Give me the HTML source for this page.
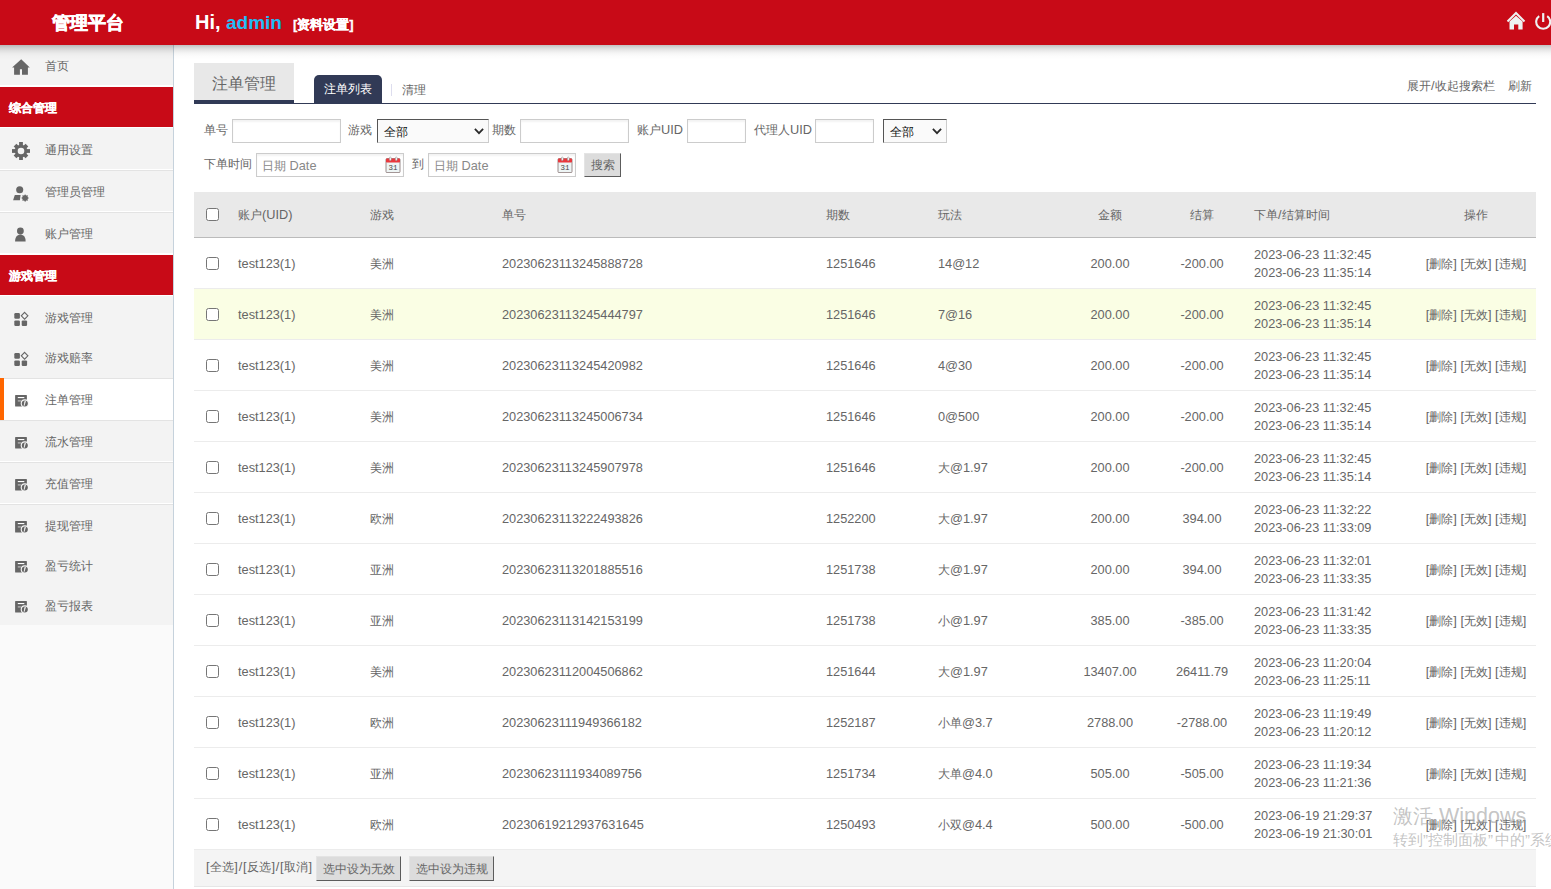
<!DOCTYPE html>
<html><head><meta charset="utf-8"><title>管理平台</title>
<style>
*{margin:0;padding:0;box-sizing:border-box}
html,body{width:1551px;height:889px;overflow:hidden;background:#fff}
body{position:relative;font-family:"Liberation Sans",sans-serif;font-size:12px;color:#555}
.abs{position:absolute}
#hdr{position:absolute;left:0;top:0;width:1551px;height:45px;background:#c80a17}
#hshadow{position:absolute;left:0;top:45px;width:1551px;height:15px;background:linear-gradient(rgba(0,0,0,.24),rgba(0,0,0,.14) 20%,rgba(0,0,0,.075) 40%,rgba(0,0,0,.035) 56%,rgba(0,0,0,.012) 75%,rgba(0,0,0,0));z-index:5}
#side{position:absolute;left:0;top:45px;width:173px;height:844px;background:#f9f9f9;border-right:1px solid #cfd6dd}
.si{position:absolute;left:0;width:173px;background:#f3f3f3}
.si .ic{position:absolute;left:5px;width:30px;height:30px}
.si .tx{position:absolute;left:45px;font-size:12px;color:#666;white-space:nowrap;line-height:14px}
.si.line{border-bottom:1px solid #e2e2e2}
.si.active{background:#fff}
.si.active:before{content:"";position:absolute;left:0;top:0;width:4px;height:100%;background:#ff6600}
.sh{position:absolute;left:0;width:173px;background:#c80a17;color:#fff;font-weight:bold;font-size:13px}
.sx{font-size:12px;color:#666;white-space:nowrap;line-height:14px}
.shx{font-size:12px;color:#fff;font-weight:bold;-webkit-text-stroke:.3px #fff;white-space:nowrap;line-height:14px}
.sh .tx{position:absolute;left:9px;line-height:14px;white-space:nowrap}
.lbl{position:absolute;font-size:12px;color:#666;white-space:nowrap;line-height:14px}
.inp{position:absolute;border:1px solid #ccc;background:#fff;box-shadow:inset 0 2px 2px rgba(0,0,0,.05)}
.cell{position:absolute;white-space:nowrap;font-size:12px;color:#666;line-height:14px}
.l{font-size:12.75px}
.lw{letter-spacing:.8px}
.q{font-family:"Liberation Sans";font-size:15px}
.cb{position:absolute;width:13px;height:13px;border:1px solid #767676;border-radius:2.5px;background:#fff}
.row{position:absolute;left:194px;width:1342px;height:51px;border-bottom:1px solid #ececec;background:#fff}
.btn{position:absolute;background:#dcdcdc;border:1px solid #e4e4e4;border-right-color:#5c5c5c;border-bottom-color:#5c5c5c;font-size:12px;color:#666;line-height:14px;text-align:center;white-space:nowrap}
</style></head><body>

<div id="hdr"></div>
<div class="abs" style="left:52px;top:13px;color:#fff;font-weight:bold;-webkit-text-stroke:.6px #fff;font-size:18px;line-height:20px;white-space:nowrap">管理平台</div>
<div class="abs" style="left:195px;top:11px;color:#fff;font-weight:bold;font-size:20px;line-height:22px;white-space:nowrap">Hi,</div>
<div class="abs" style="left:226px;top:12px;color:#22bdf5;font-weight:bold;font-size:19px;line-height:22px;white-space:nowrap">admin</div>
<div class="abs" style="left:293px;top:17px;color:#fff;font-weight:bold;-webkit-text-stroke:.3px #fff;font-size:13px;line-height:15px;white-space:nowrap">[资料设置]</div>
<svg class="abs" style="left:1500px;top:5px" width="51" height="32" viewBox="0 0 51 32"><path d="M7.5 16.5 L16 8 L24.5 16.5" fill="none" stroke="#eef2f2" stroke-width="2"/><path d="M9.5 16.5 L16 10.8 L22.6 16.5 L22.6 24.6 L18.3 24.6 L18.3 19.6 L14 19.6 L14 24.6 L9.5 24.6 Z" fill="#eef2f2"/><path d="M39.2 11.06 A7 7 0 1 0 47.2 11.06" fill="none" stroke="#eef2f2" stroke-width="2.1"/><path d="M43.2 8.1 L43.2 17" stroke="#eef2f2" stroke-width="2.2"/></svg>
<div class="abs" style="left:173px;top:45px;width:1px;height:844px;background:#c6d2dc"></div>
<div class="abs" style="left:0;top:45px;width:173px;height:40px;background:#f3f3f3"></div>
<div class="abs" style="left:0;top:85px;width:173px;height:2px;background:#ffffff"></div>
<div class="abs" style="left:0;top:87px;width:173px;height:40px;background:#c80a17"></div>
<div class="abs" style="left:0;top:127px;width:173px;height:1px;background:#ffffff"></div>
<div class="abs" style="left:0;top:128px;width:173px;height:41px;background:#f3f3f3"></div>
<div class="abs" style="left:0;top:169px;width:173px;height:1px;background:#ffffff"></div>
<div class="abs" style="left:0;top:170px;width:173px;height:1px;background:#e3e3e3"></div>
<div class="abs" style="left:0;top:171px;width:173px;height:40px;background:#f3f3f3"></div>
<div class="abs" style="left:0;top:211px;width:173px;height:1px;background:#ffffff"></div>
<div class="abs" style="left:0;top:212px;width:173px;height:1px;background:#e3e3e3"></div>
<div class="abs" style="left:0;top:213px;width:173px;height:40px;background:#f3f3f3"></div>
<div class="abs" style="left:0;top:253px;width:173px;height:2px;background:#ffffff"></div>
<div class="abs" style="left:0;top:255px;width:173px;height:40px;background:#c80a17"></div>
<div class="abs" style="left:0;top:295px;width:173px;height:1px;background:#ffffff"></div>
<div class="abs" style="left:0;top:296px;width:173px;height:82px;background:#f3f3f3"></div>
<div class="abs" style="left:0;top:378px;width:173px;height:1px;background:#e3e3e3"></div>
<div class="abs" style="left:0;top:379px;width:173px;height:41px;background:#ffffff"></div>
<div class="abs" style="left:0;top:420px;width:173px;height:1px;background:#e3e3e3"></div>
<div class="abs" style="left:0;top:421px;width:173px;height:40px;background:#f3f3f3"></div>
<div class="abs" style="left:0;top:461px;width:173px;height:1px;background:#ffffff"></div>
<div class="abs" style="left:0;top:462px;width:173px;height:1px;background:#e3e3e3"></div>
<div class="abs" style="left:0;top:463px;width:173px;height:40px;background:#f3f3f3"></div>
<div class="abs" style="left:0;top:503px;width:173px;height:1px;background:#ffffff"></div>
<div class="abs" style="left:0;top:504px;width:173px;height:1px;background:#e3e3e3"></div>
<div class="abs" style="left:0;top:505px;width:173px;height:120px;background:#f3f3f3"></div>
<div class="abs" style="left:0;top:625px;width:173px;height:264px;background:#fafafa"></div>
<div class="abs" style="left:0;top:378px;width:4px;height:42px;background:#ff6600"></div>
<div class="abs" style="left:5px;top:50px;width:30px;height:30px"><svg width="30" height="30" viewBox="0 0 30 30"><path d="M16.2 9.3 L7.1 17.6 L9.1 17.6 L9.1 24.8 L14.9 24.8 L14.9 19.2 L17 19.2 L17 24.8 L22.9 24.8 L22.9 17.6 L24.8 17.6 Z" fill="#666"/></svg></div>
<div class="abs sx" style="left:45px;top:59px">首页</div>
<div class="abs" style="left:5px;top:135px;width:30px;height:30px"><svg width="30" height="30" viewBox="0 0 30 30"><g fill="#666" transform="translate(16 16)"><rect x="-1.9" y="-9" width="3.8" height="18"/><rect x="-9" y="-1.9" width="18" height="3.8"/><rect x="-1.9" y="-8.4" width="3.8" height="16.8" transform="rotate(45)"/><rect x="-1.9" y="-8.4" width="3.8" height="16.8" transform="rotate(-45)"/><circle r="6.3"/></g><circle cx="16" cy="16" r="3.3" fill="#f3f3f3"/></svg></div>
<div class="abs sx" style="left:45px;top:143px">通用设置</div>
<div class="abs" style="left:5px;top:176px;width:30px;height:30px"><svg width="30" height="30" viewBox="0 0 30 30"><g fill="#666"><circle cx="14.7" cy="13.8" r="3.55"/><path d="M9.8 19.1 L15.6 19.1 L14.9 24.3 L8.1 24.3 Z"/><polygon points="20.10,18.15 21.13,19.56 22.86,19.29 22.59,21.02 24.00,22.05 22.59,23.08 22.86,24.81 21.13,24.54 20.10,25.95 19.07,24.54 17.34,24.81 17.61,23.08 16.20,22.05 17.61,21.02 17.34,19.29 19.07,19.56"/></g></svg></div>
<div class="abs sx" style="left:45px;top:185px">管理员管理</div>
<div class="abs" style="left:5px;top:218px;width:30px;height:30px"><svg width="30" height="30" viewBox="0 0 30 30"><g fill="#666"><circle cx="15.4" cy="13" r="3.4"/><path d="M10.1 23.6 C10 19.5 11.8 16.8 15.4 16.5 C19 16.8 20.8 19.5 20.6 23.6 Z"/></g></svg></div>
<div class="abs sx" style="left:45px;top:227px">账户管理</div>
<div class="abs" style="left:5px;top:303px;width:30px;height:30px"><svg width="30" height="30" viewBox="0 0 30 30"><g fill="#666"><rect x="9.3" y="10.1" width="5.6" height="5.6" rx="1.2"/><rect x="9.3" y="17.4" width="5.6" height="5.6" rx="1.2"/><rect x="16.7" y="17.4" width="5.4" height="5.6" rx="1.2"/></g><path d="M19.6 9.4 L22.9 12.8 L19.6 16.2 L16.3 12.8 Z" fill="none" stroke="#666" stroke-width="1.1"/></svg></div>
<div class="abs sx" style="left:45px;top:311px">游戏管理</div>
<div class="abs" style="left:5px;top:343px;width:30px;height:30px"><svg width="30" height="30" viewBox="0 0 30 30"><g fill="#666"><rect x="9.3" y="10.1" width="5.6" height="5.6" rx="1.2"/><rect x="9.3" y="17.4" width="5.6" height="5.6" rx="1.2"/><rect x="16.7" y="17.4" width="5.4" height="5.6" rx="1.2"/></g><path d="M19.6 9.4 L22.9 12.8 L19.6 16.2 L16.3 12.8 Z" fill="none" stroke="#666" stroke-width="1.1"/></svg></div>
<div class="abs sx" style="left:45px;top:351px">游戏赔率</div>
<div class="abs" style="left:5px;top:385px;width:30px;height:30px"><svg width="30" height="30" viewBox="0 0 30 30"><rect x="10.1" y="10" width="11.8" height="11.6" rx="0.5" fill="#666"/><rect x="12.8" y="12" width="6.5" height="1.1" fill="#fff"/><rect x="12.8" y="15.3" width="3.1" height="1.2" fill="#bbb"/><circle cx="19.8" cy="18.4" r="4.1" fill="#f6f6f6"/><circle cx="19.8" cy="18.4" r="3" fill="#666"/><path d="M20.5 16.2 L19.9 16.2 L19.2 20.6 Z" fill="#fff" stroke="#fff" stroke-width="0.6"/></svg></div>
<div class="abs sx" style="left:45px;top:393px">注单管理</div>
<div class="abs" style="left:5px;top:427px;width:30px;height:30px"><svg width="30" height="30" viewBox="0 0 30 30"><rect x="10.1" y="10" width="11.8" height="11.6" rx="0.5" fill="#666"/><rect x="12.8" y="12" width="6.5" height="1.1" fill="#fff"/><rect x="12.8" y="15.3" width="3.1" height="1.2" fill="#bbb"/><circle cx="19.8" cy="18.4" r="4.1" fill="#f6f6f6"/><circle cx="19.8" cy="18.4" r="3" fill="#666"/><path d="M20.5 16.2 L19.9 16.2 L19.2 20.6 Z" fill="#fff" stroke="#fff" stroke-width="0.6"/></svg></div>
<div class="abs sx" style="left:45px;top:435px">流水管理</div>
<div class="abs" style="left:5px;top:469px;width:30px;height:30px"><svg width="30" height="30" viewBox="0 0 30 30"><rect x="10.1" y="10" width="11.8" height="11.6" rx="0.5" fill="#666"/><rect x="12.8" y="12" width="6.5" height="1.1" fill="#fff"/><rect x="12.8" y="15.3" width="3.1" height="1.2" fill="#bbb"/><circle cx="19.8" cy="18.4" r="4.1" fill="#f6f6f6"/><circle cx="19.8" cy="18.4" r="3" fill="#666"/><path d="M20.5 16.2 L19.9 16.2 L19.2 20.6 Z" fill="#fff" stroke="#fff" stroke-width="0.6"/></svg></div>
<div class="abs sx" style="left:45px;top:477px">充值管理</div>
<div class="abs" style="left:5px;top:511px;width:30px;height:30px"><svg width="30" height="30" viewBox="0 0 30 30"><rect x="10.1" y="10" width="11.8" height="11.6" rx="0.5" fill="#666"/><rect x="12.8" y="12" width="6.5" height="1.1" fill="#fff"/><rect x="12.8" y="15.3" width="3.1" height="1.2" fill="#bbb"/><circle cx="19.8" cy="18.4" r="4.1" fill="#f6f6f6"/><circle cx="19.8" cy="18.4" r="3" fill="#666"/><path d="M20.5 16.2 L19.9 16.2 L19.2 20.6 Z" fill="#fff" stroke="#fff" stroke-width="0.6"/></svg></div>
<div class="abs sx" style="left:45px;top:519px">提现管理</div>
<div class="abs" style="left:5px;top:551px;width:30px;height:30px"><svg width="30" height="30" viewBox="0 0 30 30"><rect x="10.1" y="10" width="11.8" height="11.6" rx="0.5" fill="#666"/><rect x="12.8" y="12" width="6.5" height="1.1" fill="#fff"/><rect x="12.8" y="15.3" width="3.1" height="1.2" fill="#bbb"/><circle cx="19.8" cy="18.4" r="4.1" fill="#f6f6f6"/><circle cx="19.8" cy="18.4" r="3" fill="#666"/><path d="M20.5 16.2 L19.9 16.2 L19.2 20.6 Z" fill="#fff" stroke="#fff" stroke-width="0.6"/></svg></div>
<div class="abs sx" style="left:45px;top:559px">盈亏统计</div>
<div class="abs" style="left:5px;top:591px;width:30px;height:30px"><svg width="30" height="30" viewBox="0 0 30 30"><rect x="10.1" y="10" width="11.8" height="11.6" rx="0.5" fill="#666"/><rect x="12.8" y="12" width="6.5" height="1.1" fill="#fff"/><rect x="12.8" y="15.3" width="3.1" height="1.2" fill="#bbb"/><circle cx="19.8" cy="18.4" r="4.1" fill="#f6f6f6"/><circle cx="19.8" cy="18.4" r="3" fill="#666"/><path d="M20.5 16.2 L19.9 16.2 L19.2 20.6 Z" fill="#fff" stroke="#fff" stroke-width="0.6"/></svg></div>
<div class="abs sx" style="left:45px;top:599px">盈亏报表</div>
<div class="abs shx" style="left:9px;top:101px">综合管理</div>
<div class="abs shx" style="left:9px;top:269px">游戏管理</div>
<div id="hshadow"></div>
<div class="abs" style="left:194px;top:63px;width:100px;height:37px;background:#e8e8e8"></div>
<div class="abs" style="left:194px;top:100px;width:100px;height:3px;background:#313a56"></div>
<div class="abs" style="left:194px;top:103px;width:1342px;height:1px;background:#313a56"></div>
<div class="abs" style="left:212px;top:75px;font-size:16px;line-height:18px;color:#666;white-space:nowrap">注单管理</div>
<div class="abs" style="left:314px;top:75px;width:68px;height:28px;background:#313a56;border-radius:5px 5px 0 0"></div>
<div class="abs" style="left:324px;top:82px;font-size:12px;line-height:14px;color:#fff;white-space:nowrap">注单列表</div>
<div class="abs" style="left:391px;top:84px;width:1px;height:12px;background:#dde"></div>
<div class="abs" style="left:402px;top:83px;font-size:12px;line-height:14px;color:#666;white-space:nowrap">清理</div>
<div class="abs" style="left:1407px;top:79px;font-size:12px;line-height:14px;color:#666;white-space:nowrap">展开<span class="l">/</span>收起搜索栏</div>
<div class="abs" style="left:1508px;top:79px;font-size:12px;line-height:14px;color:#666;white-space:nowrap">刷新</div>
<div class="lbl" style="left:204px;top:123px">单号</div>
<div class="inp" style="left:232px;top:119px;width:109px;height:24px"></div>
<div class="lbl" style="left:348px;top:123px">游戏</div>
<div class="abs" style="left:377px;top:119px;width:112px;height:24px;background:#fafafa;border:1px solid #ccc;border-top-color:#555;border-left-color:#555"></div>
<div class="abs" style="left:384px;top:125px;font-size:12px;line-height:14px;color:#111;white-space:nowrap">全部</div>
<svg class="abs" style="left:474px;top:128px" width="10" height="7" viewBox="0 0 10 7"><path d="M0.9 0.9 L5 5.1 L9.1 0.9" fill="none" stroke="#2a2a2a" stroke-width="1.8"/></svg>
<div class="lbl" style="left:492px;top:123px">期数</div>
<div class="inp" style="left:520px;top:119px;width:109px;height:24px"></div>
<div class="lbl" style="left:637px;top:123px">账户<span class="l">UID</span></div>
<div class="inp" style="left:687px;top:119px;width:59px;height:24px"></div>
<div class="lbl" style="left:754px;top:123px">代理人<span class="l">UID</span></div>
<div class="inp" style="left:815px;top:119px;width:59px;height:24px"></div>
<div class="abs" style="left:883px;top:119px;width:64px;height:24px;background:#fafafa;border:1px solid #ccc;border-top-color:#555;border-left-color:#555"></div>
<div class="abs" style="left:890px;top:125px;font-size:12px;line-height:14px;color:#111;white-space:nowrap">全部</div>
<svg class="abs" style="left:932px;top:128px" width="10" height="7" viewBox="0 0 10 7"><path d="M0.9 0.9 L5 5.1 L9.1 0.9" fill="none" stroke="#2a2a2a" stroke-width="1.8"/></svg>
<div class="lbl" style="left:204px;top:157px">下单时间</div>
<div class="inp" style="left:256px;top:153px;width:148px;height:24px"></div>
<div class="abs" style="left:262px;top:159px;font-size:12px;line-height:14px;color:#888;white-space:nowrap">日期<span class="l"> Date</span></div>
<div class="abs" style="left:385px;top:156px"><svg width="16" height="17" viewBox="0 0 16 17"><rect x="1" y="2.6" width="14" height="14" rx="1" fill="#eef5f5" stroke="#8f7f7f" stroke-width="0.9"/><rect x="1" y="2.6" width="14" height="4" rx="0.8" fill="#e8383d"/><rect x="4.4" y="1" width="1.8" height="3.6" rx="0.9" fill="#fff" stroke="#888" stroke-width="0.5"/><rect x="10.4" y="1" width="1.8" height="3.6" rx="0.9" fill="#fff" stroke="#888" stroke-width="0.5"/><text x="8" y="14" font-family="Liberation Mono" font-size="7.5" text-anchor="middle" fill="#444">31</text></svg></div>
<div class="lbl" style="left:412px;top:157px">到</div>
<div class="inp" style="left:428px;top:153px;width:148px;height:24px"></div>
<div class="abs" style="left:434px;top:159px;font-size:12px;line-height:14px;color:#888;white-space:nowrap">日期<span class="l"> Date</span></div>
<div class="abs" style="left:557px;top:156px"><svg width="16" height="17" viewBox="0 0 16 17"><rect x="1" y="2.6" width="14" height="14" rx="1" fill="#eef5f5" stroke="#8f7f7f" stroke-width="0.9"/><rect x="1" y="2.6" width="14" height="4" rx="0.8" fill="#e8383d"/><rect x="4.4" y="1" width="1.8" height="3.6" rx="0.9" fill="#fff" stroke="#888" stroke-width="0.5"/><rect x="10.4" y="1" width="1.8" height="3.6" rx="0.9" fill="#fff" stroke="#888" stroke-width="0.5"/><text x="8" y="14" font-family="Liberation Mono" font-size="7.5" text-anchor="middle" fill="#444">31</text></svg></div>
<div class="btn" style="left:584px;top:153px;width:37px;height:24px;padding-top:4px">搜索</div>
<div class="abs" style="left:194px;top:192px;width:1342px;height:46px;background:#e9e9e9;border-bottom:1px solid #bbb"></div>
<div class="cb" style="left:206px;top:208px"></div>
<div class="cell" style="left:238px;top:208px">账户<span class="l">(UID)</span></div>
<div class="cell" style="left:370px;top:208px">游戏</div>
<div class="cell" style="left:502px;top:208px">单号</div>
<div class="cell" style="left:826px;top:208px">期数</div>
<div class="cell" style="left:938px;top:208px">玩法</div>
<div class="cell" style="left:1050px;width:120px;text-align:center;top:208px">金额</div>
<div class="cell" style="left:1142px;width:120px;text-align:center;top:208px">结算</div>
<div class="cell" style="left:1254px;top:208px">下单<span class="l">/</span>结算时间</div>
<div class="cell" style="left:1416px;width:120px;text-align:center;top:208px">操作</div>
<div class="row" style="top:238px;background:#fff"></div>
<div class="cb" style="left:206px;top:257px"></div>
<div class="cell" style="left:238px;top:257px"><span class="l">test123(1)</span></div>
<div class="cell" style="left:370px;top:257px">美洲</div>
<div class="cell" style="left:502px;top:257px"><span class="l">20230623113245888728</span></div>
<div class="cell" style="left:826px;top:257px"><span class="l">1251646</span></div>
<div class="cell" style="left:938px;top:257px"><span class="l">14@12</span></div>
<div class="cell" style="left:1050px;width:120px;text-align:center;top:257px"><span class="l">200.00</span></div>
<div class="cell" style="left:1142px;width:120px;text-align:center;top:257px"><span class="l">-200.00</span></div>
<div class="cell" style="left:1254px;top:248px"><span class="l">2023-06-23 11:32:45</span></div>
<div class="cell" style="left:1254px;top:266px"><span class="l">2023-06-23 11:35:14</span></div>
<div class="cell" style="left:1396px;width:160px;text-align:center;top:257px"><span class="l">[</span>删除<span class="l">] [</span>无效<span class="l">] [</span>违规<span class="l">]</span></div>
<div class="row" style="top:289px;background:#fafee4"></div>
<div class="cb" style="left:206px;top:308px"></div>
<div class="cell" style="left:238px;top:308px"><span class="l">test123(1)</span></div>
<div class="cell" style="left:370px;top:308px">美洲</div>
<div class="cell" style="left:502px;top:308px"><span class="l">20230623113245444797</span></div>
<div class="cell" style="left:826px;top:308px"><span class="l">1251646</span></div>
<div class="cell" style="left:938px;top:308px"><span class="l">7@16</span></div>
<div class="cell" style="left:1050px;width:120px;text-align:center;top:308px"><span class="l">200.00</span></div>
<div class="cell" style="left:1142px;width:120px;text-align:center;top:308px"><span class="l">-200.00</span></div>
<div class="cell" style="left:1254px;top:299px"><span class="l">2023-06-23 11:32:45</span></div>
<div class="cell" style="left:1254px;top:317px"><span class="l">2023-06-23 11:35:14</span></div>
<div class="cell" style="left:1396px;width:160px;text-align:center;top:308px"><span class="l">[</span>删除<span class="l">] [</span>无效<span class="l">] [</span>违规<span class="l">]</span></div>
<div class="row" style="top:340px;background:#fff"></div>
<div class="cb" style="left:206px;top:359px"></div>
<div class="cell" style="left:238px;top:359px"><span class="l">test123(1)</span></div>
<div class="cell" style="left:370px;top:359px">美洲</div>
<div class="cell" style="left:502px;top:359px"><span class="l">20230623113245420982</span></div>
<div class="cell" style="left:826px;top:359px"><span class="l">1251646</span></div>
<div class="cell" style="left:938px;top:359px"><span class="l">4@30</span></div>
<div class="cell" style="left:1050px;width:120px;text-align:center;top:359px"><span class="l">200.00</span></div>
<div class="cell" style="left:1142px;width:120px;text-align:center;top:359px"><span class="l">-200.00</span></div>
<div class="cell" style="left:1254px;top:350px"><span class="l">2023-06-23 11:32:45</span></div>
<div class="cell" style="left:1254px;top:368px"><span class="l">2023-06-23 11:35:14</span></div>
<div class="cell" style="left:1396px;width:160px;text-align:center;top:359px"><span class="l">[</span>删除<span class="l">] [</span>无效<span class="l">] [</span>违规<span class="l">]</span></div>
<div class="row" style="top:391px;background:#fff"></div>
<div class="cb" style="left:206px;top:410px"></div>
<div class="cell" style="left:238px;top:410px"><span class="l">test123(1)</span></div>
<div class="cell" style="left:370px;top:410px">美洲</div>
<div class="cell" style="left:502px;top:410px"><span class="l">20230623113245006734</span></div>
<div class="cell" style="left:826px;top:410px"><span class="l">1251646</span></div>
<div class="cell" style="left:938px;top:410px"><span class="l">0@500</span></div>
<div class="cell" style="left:1050px;width:120px;text-align:center;top:410px"><span class="l">200.00</span></div>
<div class="cell" style="left:1142px;width:120px;text-align:center;top:410px"><span class="l">-200.00</span></div>
<div class="cell" style="left:1254px;top:401px"><span class="l">2023-06-23 11:32:45</span></div>
<div class="cell" style="left:1254px;top:419px"><span class="l">2023-06-23 11:35:14</span></div>
<div class="cell" style="left:1396px;width:160px;text-align:center;top:410px"><span class="l">[</span>删除<span class="l">] [</span>无效<span class="l">] [</span>违规<span class="l">]</span></div>
<div class="row" style="top:442px;background:#fff"></div>
<div class="cb" style="left:206px;top:461px"></div>
<div class="cell" style="left:238px;top:461px"><span class="l">test123(1)</span></div>
<div class="cell" style="left:370px;top:461px">美洲</div>
<div class="cell" style="left:502px;top:461px"><span class="l">20230623113245907978</span></div>
<div class="cell" style="left:826px;top:461px"><span class="l">1251646</span></div>
<div class="cell" style="left:938px;top:461px">大<span class="l">@1.97</span></div>
<div class="cell" style="left:1050px;width:120px;text-align:center;top:461px"><span class="l">200.00</span></div>
<div class="cell" style="left:1142px;width:120px;text-align:center;top:461px"><span class="l">-200.00</span></div>
<div class="cell" style="left:1254px;top:452px"><span class="l">2023-06-23 11:32:45</span></div>
<div class="cell" style="left:1254px;top:470px"><span class="l">2023-06-23 11:35:14</span></div>
<div class="cell" style="left:1396px;width:160px;text-align:center;top:461px"><span class="l">[</span>删除<span class="l">] [</span>无效<span class="l">] [</span>违规<span class="l">]</span></div>
<div class="row" style="top:493px;background:#fff"></div>
<div class="cb" style="left:206px;top:512px"></div>
<div class="cell" style="left:238px;top:512px"><span class="l">test123(1)</span></div>
<div class="cell" style="left:370px;top:512px">欧洲</div>
<div class="cell" style="left:502px;top:512px"><span class="l">20230623113222493826</span></div>
<div class="cell" style="left:826px;top:512px"><span class="l">1252200</span></div>
<div class="cell" style="left:938px;top:512px">大<span class="l">@1.97</span></div>
<div class="cell" style="left:1050px;width:120px;text-align:center;top:512px"><span class="l">200.00</span></div>
<div class="cell" style="left:1142px;width:120px;text-align:center;top:512px"><span class="l">394.00</span></div>
<div class="cell" style="left:1254px;top:503px"><span class="l">2023-06-23 11:32:22</span></div>
<div class="cell" style="left:1254px;top:521px"><span class="l">2023-06-23 11:33:09</span></div>
<div class="cell" style="left:1396px;width:160px;text-align:center;top:512px"><span class="l">[</span>删除<span class="l">] [</span>无效<span class="l">] [</span>违规<span class="l">]</span></div>
<div class="row" style="top:544px;background:#fff"></div>
<div class="cb" style="left:206px;top:563px"></div>
<div class="cell" style="left:238px;top:563px"><span class="l">test123(1)</span></div>
<div class="cell" style="left:370px;top:563px">亚洲</div>
<div class="cell" style="left:502px;top:563px"><span class="l">20230623113201885516</span></div>
<div class="cell" style="left:826px;top:563px"><span class="l">1251738</span></div>
<div class="cell" style="left:938px;top:563px">大<span class="l">@1.97</span></div>
<div class="cell" style="left:1050px;width:120px;text-align:center;top:563px"><span class="l">200.00</span></div>
<div class="cell" style="left:1142px;width:120px;text-align:center;top:563px"><span class="l">394.00</span></div>
<div class="cell" style="left:1254px;top:554px"><span class="l">2023-06-23 11:32:01</span></div>
<div class="cell" style="left:1254px;top:572px"><span class="l">2023-06-23 11:33:35</span></div>
<div class="cell" style="left:1396px;width:160px;text-align:center;top:563px"><span class="l">[</span>删除<span class="l">] [</span>无效<span class="l">] [</span>违规<span class="l">]</span></div>
<div class="row" style="top:595px;background:#fff"></div>
<div class="cb" style="left:206px;top:614px"></div>
<div class="cell" style="left:238px;top:614px"><span class="l">test123(1)</span></div>
<div class="cell" style="left:370px;top:614px">亚洲</div>
<div class="cell" style="left:502px;top:614px"><span class="l">20230623113142153199</span></div>
<div class="cell" style="left:826px;top:614px"><span class="l">1251738</span></div>
<div class="cell" style="left:938px;top:614px">小<span class="l">@1.97</span></div>
<div class="cell" style="left:1050px;width:120px;text-align:center;top:614px"><span class="l">385.00</span></div>
<div class="cell" style="left:1142px;width:120px;text-align:center;top:614px"><span class="l">-385.00</span></div>
<div class="cell" style="left:1254px;top:605px"><span class="l">2023-06-23 11:31:42</span></div>
<div class="cell" style="left:1254px;top:623px"><span class="l">2023-06-23 11:33:35</span></div>
<div class="cell" style="left:1396px;width:160px;text-align:center;top:614px"><span class="l">[</span>删除<span class="l">] [</span>无效<span class="l">] [</span>违规<span class="l">]</span></div>
<div class="row" style="top:646px;background:#fff"></div>
<div class="cb" style="left:206px;top:665px"></div>
<div class="cell" style="left:238px;top:665px"><span class="l">test123(1)</span></div>
<div class="cell" style="left:370px;top:665px">美洲</div>
<div class="cell" style="left:502px;top:665px"><span class="l">20230623112004506862</span></div>
<div class="cell" style="left:826px;top:665px"><span class="l">1251644</span></div>
<div class="cell" style="left:938px;top:665px">大<span class="l">@1.97</span></div>
<div class="cell" style="left:1050px;width:120px;text-align:center;top:665px"><span class="l">13407.00</span></div>
<div class="cell" style="left:1142px;width:120px;text-align:center;top:665px"><span class="l">26411.79</span></div>
<div class="cell" style="left:1254px;top:656px"><span class="l">2023-06-23 11:20:04</span></div>
<div class="cell" style="left:1254px;top:674px"><span class="l">2023-06-23 11:25:11</span></div>
<div class="cell" style="left:1396px;width:160px;text-align:center;top:665px"><span class="l">[</span>删除<span class="l">] [</span>无效<span class="l">] [</span>违规<span class="l">]</span></div>
<div class="row" style="top:697px;background:#fff"></div>
<div class="cb" style="left:206px;top:716px"></div>
<div class="cell" style="left:238px;top:716px"><span class="l">test123(1)</span></div>
<div class="cell" style="left:370px;top:716px">欧洲</div>
<div class="cell" style="left:502px;top:716px"><span class="l">20230623111949366182</span></div>
<div class="cell" style="left:826px;top:716px"><span class="l">1252187</span></div>
<div class="cell" style="left:938px;top:716px">小单<span class="l">@3.7</span></div>
<div class="cell" style="left:1050px;width:120px;text-align:center;top:716px"><span class="l">2788.00</span></div>
<div class="cell" style="left:1142px;width:120px;text-align:center;top:716px"><span class="l">-2788.00</span></div>
<div class="cell" style="left:1254px;top:707px"><span class="l">2023-06-23 11:19:49</span></div>
<div class="cell" style="left:1254px;top:725px"><span class="l">2023-06-23 11:20:12</span></div>
<div class="cell" style="left:1396px;width:160px;text-align:center;top:716px"><span class="l">[</span>删除<span class="l">] [</span>无效<span class="l">] [</span>违规<span class="l">]</span></div>
<div class="row" style="top:748px;background:#fff"></div>
<div class="cb" style="left:206px;top:767px"></div>
<div class="cell" style="left:238px;top:767px"><span class="l">test123(1)</span></div>
<div class="cell" style="left:370px;top:767px">亚洲</div>
<div class="cell" style="left:502px;top:767px"><span class="l">20230623111934089756</span></div>
<div class="cell" style="left:826px;top:767px"><span class="l">1251734</span></div>
<div class="cell" style="left:938px;top:767px">大单<span class="l">@4.0</span></div>
<div class="cell" style="left:1050px;width:120px;text-align:center;top:767px"><span class="l">505.00</span></div>
<div class="cell" style="left:1142px;width:120px;text-align:center;top:767px"><span class="l">-505.00</span></div>
<div class="cell" style="left:1254px;top:758px"><span class="l">2023-06-23 11:19:34</span></div>
<div class="cell" style="left:1254px;top:776px"><span class="l">2023-06-23 11:21:36</span></div>
<div class="cell" style="left:1396px;width:160px;text-align:center;top:767px"><span class="l">[</span>删除<span class="l">] [</span>无效<span class="l">] [</span>违规<span class="l">]</span></div>
<div class="row" style="top:799px;background:#fff"></div>
<div class="cb" style="left:206px;top:818px"></div>
<div class="cell" style="left:238px;top:818px"><span class="l">test123(1)</span></div>
<div class="cell" style="left:370px;top:818px">欧洲</div>
<div class="cell" style="left:502px;top:818px"><span class="l">20230619212937631645</span></div>
<div class="cell" style="left:826px;top:818px"><span class="l">1250493</span></div>
<div class="cell" style="left:938px;top:818px">小双<span class="l">@4.4</span></div>
<div class="cell" style="left:1050px;width:120px;text-align:center;top:818px"><span class="l">500.00</span></div>
<div class="cell" style="left:1142px;width:120px;text-align:center;top:818px"><span class="l">-500.00</span></div>
<div class="cell" style="left:1254px;top:809px"><span class="l">2023-06-19 21:29:37</span></div>
<div class="cell" style="left:1254px;top:827px"><span class="l">2023-06-19 21:30:01</span></div>
<div class="cell" style="left:1396px;width:160px;text-align:center;top:818px"><span class="l">[</span>删除<span class="l">] [</span>无效<span class="l">] [</span>违规<span class="l">]</span></div>
<div class="abs" style="left:194px;top:850px;width:1342px;height:37px;background:#f4f4f4;border-bottom:1px solid #e6e6e6"></div>
<div class="cell" style="left:206px;top:860px"><span class="l lw">[</span>全选<span class="l lw">]/[</span>反选<span class="l lw">]/[</span>取消<span class="l lw">]</span></div>
<div class="btn" style="left:316px;top:856px;width:85px;height:25px;padding-top:5px">选中设为无效</div>
<div class="btn" style="left:409px;top:856px;width:85px;height:25px;padding-top:5px">选中设为违规</div>
<div class="abs" style="left:1393px;top:804px;font-size:20px;line-height:24px;color:rgba(160,160,160,.62);white-space:nowrap">激活<span style="font-size:21.5px"> Windows</span></div>
<div class="abs" style="left:1393px;top:831px;font-size:15px;line-height:17px;color:rgba(160,160,160,.62);white-space:nowrap">转到<span class="q">”</span>控制面板<span class="q" style="margin-right:2px">”</span>中的<span class="q">”</span>系统<span class="q">”</span>以激活 Windows。</div>
</body></html>
